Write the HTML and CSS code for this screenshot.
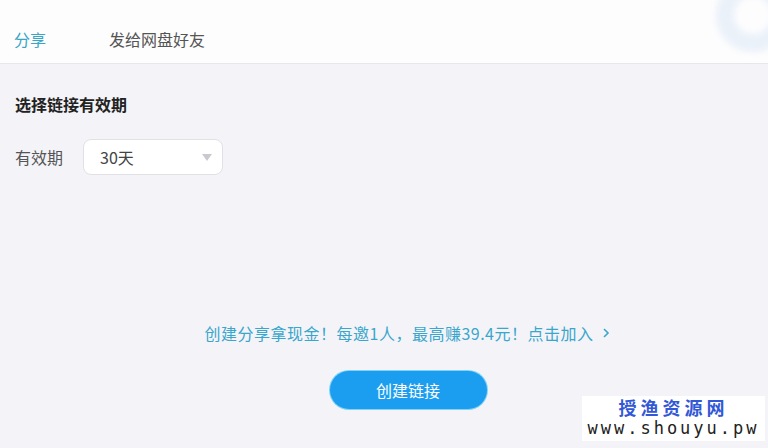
FILE: index.html
```html
<!DOCTYPE html>
<html lang="zh-CN">
<head>
    <meta charset="UTF-8">
    <meta name="viewport" content="width=device-width, initial-scale=1.0">
    <title>分享</title>
    <link rel="stylesheet" href="styles.css">
</head>
<body>

    <div class="dialog">
        <div class="tabs">
            <div class="tab active">分享</div>
            <div class="tab">发给网盘好友</div>
            <div class="ring"></div>
        </div>

        <div class="content">
            <h3>选择链接有效期</h3>
            <div class="row">
                <label>有效期</label>
                <div class="select">
                    <span>30天</span>
                    <span class="arrow"></span>
                </div>
            </div>
        </div>

        <div class="footer">
            <a class="promo" href="#">创建分享拿现金！每邀1人，最高赚39.4元！点击加入
                <svg width="10" height="14" viewBox="0 0 10 14"><path d="M3 3l4 4-4 4" fill="none" stroke="#3aa6cc" stroke-width="1.6"/></svg>
            </a>
            <button class="create">创建链接</button>
        </div>

        <div class="watermark">
            <div class="wm-title">授渔资源网</div>
            <div class="wm-url">www.shouyu.pw</div>
        </div>
    </div>

</body>
</html>
```

FILE: styles.css
```css
body {
    margin: 0;
    font-family: "Noto Sans CJK SC", "Noto Sans", sans-serif;
    background-color: #f4f4f8;
}

.dialog {
    position: relative;
    width: 768px;
    height: 448px;
    overflow: hidden;
    background-color: #f4f4f8;
}

.tabs {
    position: relative;
    display: flex;
    height: 64px;
    padding-left: 14px;
    background-color: #fdfdfe;
    border-bottom: 1px solid #e6e6ec;
    box-sizing: border-box;
    overflow: hidden;
}

.tab {
    display: flex;
    align-items: center;
    height: 64px;
    font-size: 16px;
    color: #555;
    margin-right: 63px;
    box-sizing: border-box;
    padding-top: 14px;
}

.tab.active {
    color: #3aa6c6;
    border-bottom: 2px solid #55b4cf;
    height: 65px;
}

.ring {
    position: absolute;
    right: -22px;
    top: -22px;
    width: 38px;
    height: 38px;
    border: 18px solid #eaf1f9;
    border-radius: 50%;
    filter: blur(3px);
}

.content {
    padding: 22px 15px 0;
}

.content h3 {
    margin: 0;
    font-size: 16px;
    font-weight: bold;
    color: #222;
    line-height: 36px;
}

.row {
    display: flex;
    align-items: center;
    margin-top: 17px;
}

.row label {
    font-size: 16px;
    color: #555;
    width: 68px;
}

.select {
    display: flex;
    align-items: center;
    justify-content: space-between;
    width: 140px;
    height: 36px;
    padding: 0 10px 0 16px;
    box-sizing: border-box;
    background-color: #fff;
    border: 1px solid #e0e0e6;
    border-radius: 8px;
    font-size: 16px;
    color: #444;
}

.arrow {
    width: 0;
    height: 0;
    border-left: 5px solid transparent;
    border-right: 5px solid transparent;
    border-top: 7px solid #c9c9cf;
}

.footer {
    display: flex;
    flex-direction: column;
    align-items: center;
    margin-top: 146px;
    padding-left: 48px;
}

.promo {
    display: flex;
    align-items: center;
    gap: 8px;
    font-size: 16px;
    letter-spacing: 0.5px;
    color: #3aa6cc;
    text-decoration: none;
}

.create {
    margin-top: 26px;
    width: 157px;
    height: 38px;
    border: none;
    border-radius: 20px;
    background-color: #1c9ef0;
    box-shadow: 0 0 0 1px #7fd3f6;
    color: #fff;
    font-size: 16px;
    font-family: inherit;
    cursor: pointer;
}

.watermark {
    position: absolute;
    left: 582px;
    top: 396px;
    width: 183px;
    height: 45px;
    background-color: #fff;
    text-align: center;
    font-weight: bold;
}

.wm-title {
    font-size: 18px;
    line-height: 22px;
    color: #3358d6;
    letter-spacing: 4px;
}

.wm-url {
    font-family: "DejaVu Sans Mono", monospace;
    font-size: 17px;
    line-height: 20px;
    color: #222;
    letter-spacing: 3px;
    font-weight: normal;
}
```
